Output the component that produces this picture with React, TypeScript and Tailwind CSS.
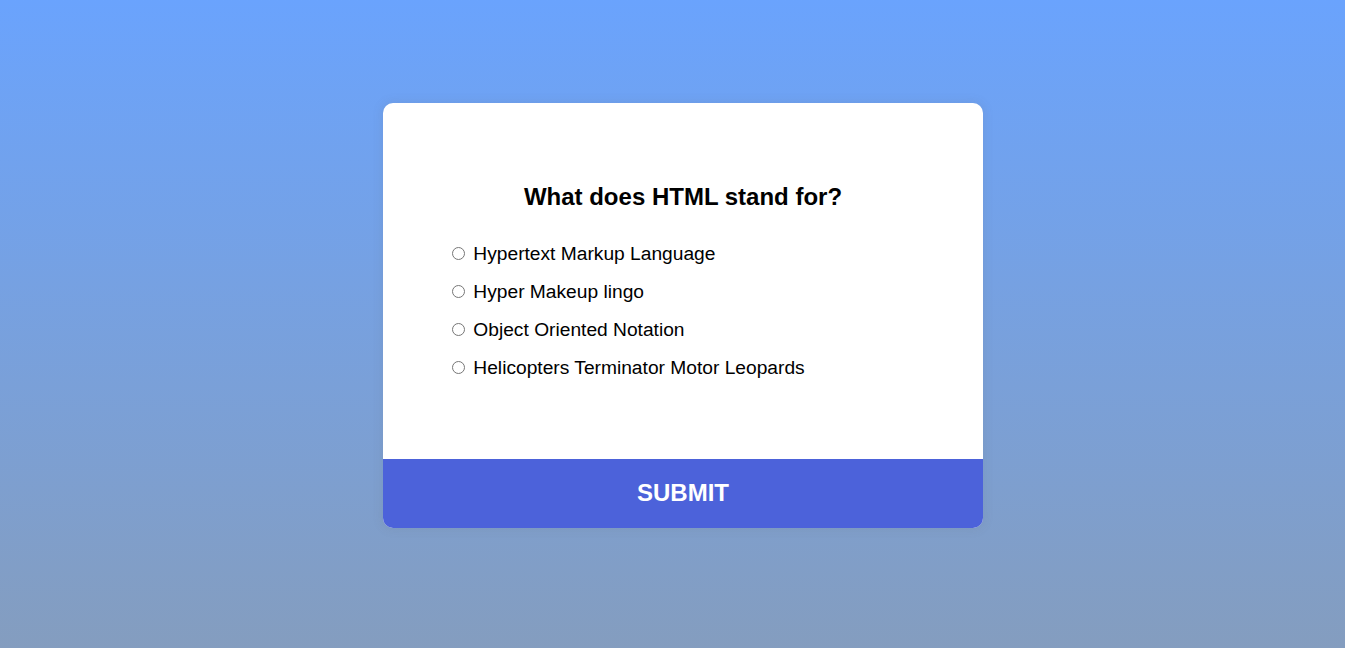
import { useState } from "react";

const answers = [
  { id: "a", text: "Hypertext Markup Language" },
  { id: "b", text: "Hyper Makeup lingo" },
  { id: "c", text: "Object Oriented Notation" },
  { id: "d", text: "Helicopters Terminator Motor Leopards" },
];

export default function App() {
  const [picked, setPicked] = useState<string | null>(null);

  return (
    <div className="min-h-screen w-full bg-gradient-to-b from-[#6aa3fd] to-[#849dbf] flex justify-center pt-[103px] pl-[21px] font-['Liberation_Sans',Arial,sans-serif]">
      <div className="w-[600px] h-fit bg-white rounded-[10px] overflow-hidden shadow-[0_0_10px_2px_rgba(100,100,100,0.1)]">
        <div className="p-16">
          <h2 className="p-4 m-0 text-center text-2xl font-bold text-black leading-[27.6px]">
            What does HTML stand for?
          </h2>
          <ul className="my-4 flex flex-col gap-4">
            {answers.map((a) => (
              <li key={a.id} className="text-[19.2px] leading-[22px] text-black">
                <input
                  type="radio"
                  name="answer"
                  id={a.id}
                  checked={picked === a.id}
                  onChange={() => setPicked(a.id)}
                  className="ml-[5px] mr-[3px] mt-[3px] w-[13px] h-[13px] align-baseline"
                />{" "}
                <label htmlFor={a.id} className="cursor-pointer">
                  {a.text}
                </label>
              </li>
            ))}
          </ul>
        </div>
        <button className="block w-full h-[69px] bg-[#4c62da] text-white text-2xl font-bold cursor-pointer">
          SUBMIT
        </button>
      </div>
    </div>
  );
}
